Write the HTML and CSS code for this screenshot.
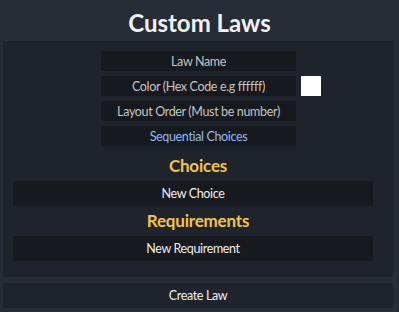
FILE: index.html
```html
<!DOCTYPE html>
<html>
<head>
<meta charset="utf-8">
<link rel="stylesheet" href="styles.css">
</head>
<body>
<div class="window">
  <h1 class="title">Custom Laws</h1>
  <div class="panel">
    <div class="fields">
      <div class="row"><div class="field">Law Name</div></div>
      <div class="row"><div class="field">Color (Hex Code e.g ffffff)</div><div class="swatch"></div></div>
      <div class="row"><div class="field">Layout Order (Must be number)</div></div>
      <div class="row"><div class="field toggle">Sequential Choices</div></div>
    </div>
    <div class="heading first">Choices</div>
    <div class="wide-btn">New Choice</div>
    <div class="heading">Requirements</div>
    <div class="wide-btn">New Requirement</div>
  </div>
  <div class="create">Create Law</div>
</div>
</body>
</html>
```
FILE: styles.css
```css
html, body {
  margin: 0;
  padding: 0;
}
body {
  background: #272d37;
  width: 399px;
  height: 312px;
  overflow: hidden;
  font-family: Lato, "Noto Sans", sans-serif;
}
.window {
  display: flex;
  flex-direction: column;
}
.title {
  margin: 0;
  height: 41px;
  line-height: 46px;
  text-align: center;
  color: #f2f2f2;
  font-size: 24px;
  font-weight: 700;
}
.panel {
  margin-left: 3px;
  width: 390px;
  height: 236px;
  box-sizing: border-box;
  background: #1f232b;
  padding-top: 10px;
  display: flex;
  flex-direction: column;
}
.fields {
  display: flex;
  flex-direction: column;
  gap: 5px;
  align-items: flex-start;
  padding-left: 98px;
}
.row {
  display: flex;
  gap: 5px;
}
.field {
  width: 195px;
  height: 20px;
  background: #16191d;
  color: #c4c4c4;
  font-size: 12.5px;
  letter-spacing: -0.35px;
  line-height: 21px;
  text-align: center;
}
.field.toggle {
  color: #92baf2;
}
.swatch {
  width: 20px;
  height: 20px;
  background: #ffffff;
}
.heading {
  height: 20px;
  line-height: 20px;
  margin-top: 5px;
  margin-bottom: 5px;
  text-align: center;
  color: #f5c445;
  font-size: 17px;
  font-weight: 700;
  letter-spacing: -0.2px;
}
.heading.first {
  margin-top: 10px;
}
.wide-btn {
  margin-left: 10px;
  width: 360px;
  height: 25px;
  line-height: 26px;
  background: #16191d;
  color: #f0f0f0;
  font-size: 12.5px;
  letter-spacing: -0.35px;
  text-align: center;
}
.create {
  margin-top: 6px;
  margin-left: 3px;
  width: 390px;
  height: 25px;
  line-height: 26px;
  background: #1f232b;
  color: #f0f0f0;
  font-size: 12.5px;
  letter-spacing: -0.35px;
  text-align: center;
}
```
